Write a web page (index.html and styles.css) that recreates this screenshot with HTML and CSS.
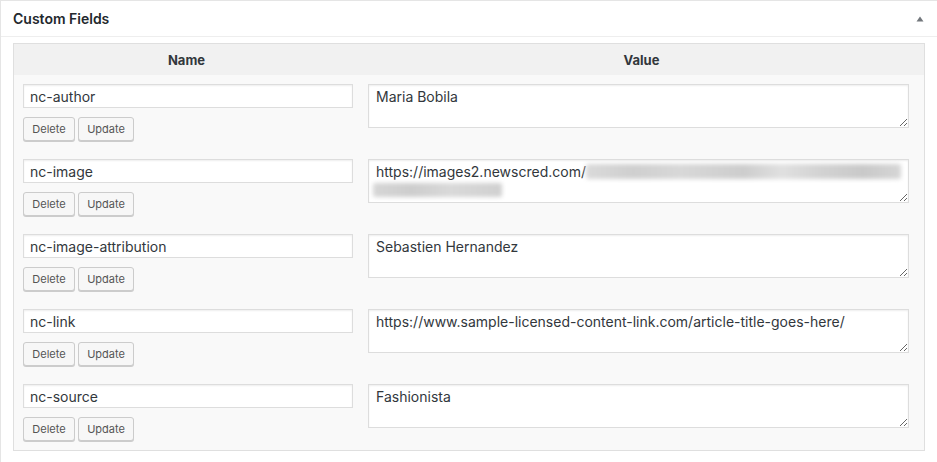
FILE: index.html
```html
<!DOCTYPE html>
<html>
<head>
<meta charset="utf-8">
<link rel="stylesheet" href="styles.css">
</head>
<body>
<div class="postbox">
  <div class="postbox-header">
    <h2 class="postbox-title">Custom Fields</h2>
    <svg class="toggle" width="8" height="6" viewBox="0 0 8 6"><path d="M0.5 5.5 L4 0.5 L7.5 5.5 Z" fill="#72777c"/></svg>
  </div>
  <div class="inside">
    <div class="list-table">
      <div class="thead">
        <div class="col-name">Name</div>
        <div class="col-value">Value</div>
      </div>
      <div class="row">
        <div class="col-name">
          <input class="key" type="text" value="nc-author">
          <div class="actions"><button class="btn">Delete</button><button class="btn">Update</button></div>
        </div>
        <div class="col-value"><textarea class="val">Maria Bobila</textarea></div>
      </div>
      <div class="row">
        <div class="col-name">
          <input class="key" type="text" value="nc-image">
          <div class="actions"><button class="btn">Delete</button><button class="btn">Update</button></div>
        </div>
        <div class="col-value">
          <div class="val-wrap">
            <textarea class="val">https://images2.newscred.com/</textarea>
            <span class="blur blur-1"></span>
            <span class="blur blur-2"></span>
          </div>
        </div>
      </div>
      <div class="row">
        <div class="col-name">
          <input class="key" type="text" value="nc-image-attribution">
          <div class="actions"><button class="btn">Delete</button><button class="btn">Update</button></div>
        </div>
        <div class="col-value"><textarea class="val">Sebastien Hernandez</textarea></div>
      </div>
      <div class="row">
        <div class="col-name">
          <input class="key" type="text" value="nc-link">
          <div class="actions"><button class="btn">Delete</button><button class="btn">Update</button></div>
        </div>
        <div class="col-value"><textarea class="val">https://www.sample-licensed-content-link.com/article-title-goes-here/</textarea></div>
      </div>
      <div class="row">
        <div class="col-name">
          <input class="key" type="text" value="nc-source">
          <div class="actions"><button class="btn">Delete</button><button class="btn">Update</button></div>
        </div>
        <div class="col-value"><textarea class="val">Fashionista</textarea></div>
      </div>
    </div>
  </div>
</div>
</body>
</html>
```
FILE: styles.css
```css
html, body {
  margin: 0;
  padding: 0;
  overflow: hidden;
  background: #ffffff;
}
body {
  font-family: Inter, "Liberation Sans", Arial, sans-serif;
  color: #32373c;
}
.postbox {
  width: 938px;
  box-sizing: border-box;
  border: 1px solid #e5e5e5;
  background: #fff;
  box-shadow: 0 1px 1px rgba(0,0,0,0.04);
}
.postbox-header {
  height: 35px;
  border-bottom: 1px solid #eeeeee;
  display: flex;
  align-items: center;
  justify-content: space-between;
  padding: 0 13px 0 12px;
  box-sizing: content-box;
}
.postbox-title {
  margin: 0;
  font-size: 14px;
  font-weight: 600;
  color: #23282d;
}
.toggle {
  display: block;
  margin-top: 1px;
  width: 8px;
  height: 6px;
}
.inside {
  padding: 6px 12px 12px 12px;
}
.list-table {
  border: 1px solid #dfdfdf;
  background: #f9f9f9;
}
.thead {
  display: flex;
  height: 31px;
  background: #f1f1f1;
  font-size: 13px;
  font-weight: 700;
  color: #32373c;
}
.thead .col-name, .thead .col-value {
  display: flex;
  align-items: center;
  justify-content: center;
}
.col-name {
  width: 345px;
  flex: none;
}
.col-value {
  flex: 1;
}
.row {
  display: flex;
  padding: 9px 0;
}
.row .col-name, .row .col-value {
  padding-left: 9px;
  box-sizing: border-box;
}
.key {
  display: block;
  width: 330px;
  height: 24px;
  box-sizing: border-box;
  margin: 0;
  border: 1px solid #dddddd;
  box-shadow: inset 0 1px 2px rgba(0,0,0,0.07);
  background: #fff;
  padding: 0 6px;
  font-family: inherit;
  font-size: 14px;
  color: #32373c;
  outline: none;
}
.actions {
  display: flex;
  gap: 3px;
  margin-top: 9px;
}
.btn {
  height: 24px;
  box-sizing: border-box;
  padding: 0 8px 1px;
  margin: 0;
  border: 1px solid #cccccc;
  border-radius: 3px;
  background: #f7f7f7;
  box-shadow: 0 1px 0 #cccccc;
  color: #555555;
  font-family: inherit;
  font-size: 11px;
  line-height: 22px;
}
.btn:first-child { width: 52px; }
.btn:last-child { width: 56px; }
.val-wrap {
  position: relative;
  width: 541px;
  height: 44px;
}
.val {
  display: block;
  width: 541px;
  height: 44px;
  box-sizing: border-box;
  margin: 0;
  border: 1px solid #dddddd;
  box-shadow: inset 0 1px 2px rgba(0,0,0,0.07);
  background: #fff;
  padding: 2px 7px;
  font-family: inherit;
  font-size: 14px;
  line-height: 19px;
  color: #32373c;
  outline: none;
}
.blur {
  position: absolute;
  display: block;
  filter: blur(2px);
  border-radius: 2px;
}
.blur-1 {
  left: 218px;
  top: 5px;
  width: 315px;
  height: 15px;
  background: linear-gradient(90deg, #dadada 0%, #cfcfcf 15%, #d8d8d8 30%, #cdcdcd 50%, #e0e0e0 62%, #d2d2d2 75%, #c9c9c9 88%, #d6d6d6 100%);
}
.blur-2 {
  left: 5px;
  top: 24px;
  width: 129px;
  height: 14px;
  background: linear-gradient(90deg, #d6d6d6 0%, #cdcdcd 30%, #d9d9d9 60%, #d0d0d0 100%);
}
```
